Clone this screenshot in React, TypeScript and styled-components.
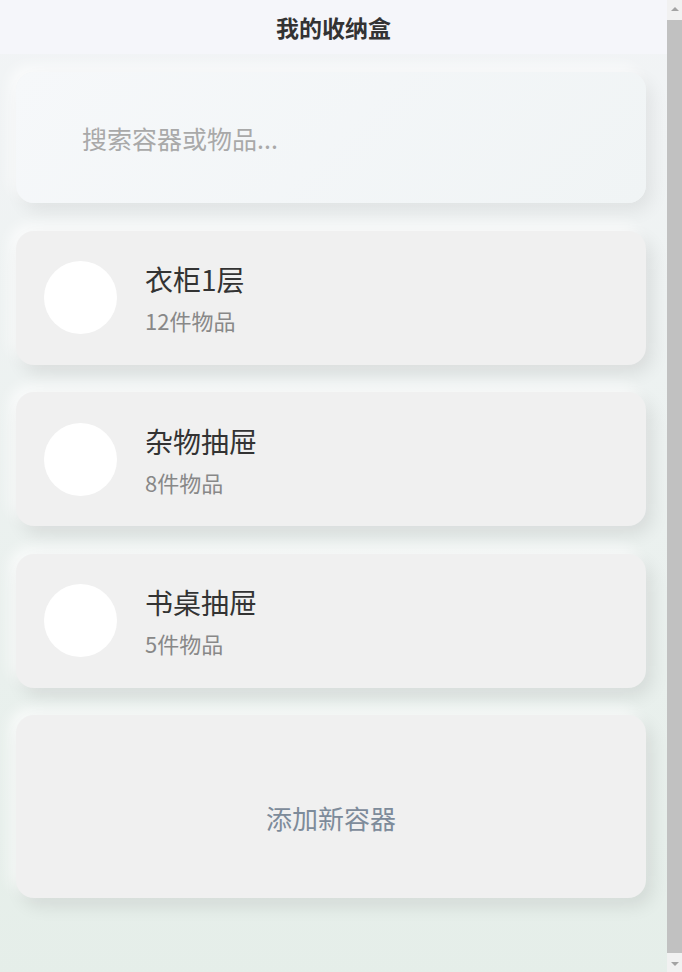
import React from "react";
import styled, { createGlobalStyle } from "styled-components";

const Global = createGlobalStyle`
  html, body {
    margin: 0;
    padding: 0;
  }
  body {
    font-family: "Noto Sans CJK SC", "Noto Sans", sans-serif;
    background: linear-gradient(180deg, #f2f4f6 0%, #e5eee9 100%);
    min-height: 100vh;
  }
  * { box-sizing: border-box; }
`;

const Page = styled.div`
  display: flex;
  flex-direction: column;
  margin-right: 15px;
`;

const Header = styled.header`
  height: 54px;
  display: flex;
  align-items: center;
  justify-content: center;
  background: #f5f6fa;
`;

const HeaderTitle = styled.h1`
  margin: 0;
  font-size: 23px;
  font-weight: 700;
  color: #333;
`;

const Main = styled.main`
  display: flex;
  flex-direction: column;
  gap: 27.5px;
  padding: 18px 21px 82px 16px;
`;

const SearchBox = styled.div`
  height: 131px;
  border-radius: 18px;
  background: linear-gradient(135deg, #f6f8fa 0%, #f0f4f5 100%);
  box-shadow: 6px 8px 18px rgba(0, 0, 0, 0.07), -6px -6px 14px rgba(255, 255, 255, 0.7);
  display: flex;
  align-items: center;
  padding: 0 24px 0 64px;
`;

const SearchInput = styled.input`
  border: none;
  outline: none;
  background: transparent;
  width: 100%;
  font-family: inherit;
  font-size: 25px;
  color: #333;
  &::placeholder {
    color: #a9a9a9;
  }
`;

const Card = styled.div`
  height: 134px;
  border-radius: 18px;
  background: #f0f0f0;
  box-shadow: 6px 8px 18px rgba(0, 0, 0, 0.09), -6px -6px 14px rgba(255, 255, 255, 0.75);
  display: flex;
  align-items: center;
  padding: 0 28px;
  gap: 28px;
`;

const Avatar = styled.div`
  width: 73px;
  height: 73px;
  border-radius: 50%;
  background: #ffffff;
  flex-shrink: 0;
`;

const Info = styled.div`
  display: flex;
  flex-direction: column;
  gap: 9px;
`;

const Name = styled.div`
  font-size: 28px;
  line-height: 36px;
  color: #333;
`;

const Count = styled.div`
  font-size: 22px;
  line-height: 28px;
  color: #888;
`;

const AddCard = styled.div`
  height: 183px;
  border-radius: 18px;
  background: #f0f0f0;
  box-shadow: 6px 8px 18px rgba(0, 0, 0, 0.09), -6px -6px 14px rgba(255, 255, 255, 0.75);
  display: flex;
  align-items: center;
  justify-content: center;
  padding-top: 22px;
`;

const AddText = styled.span`
  font-size: 26px;
  color: #7d8b9a;
`;

/* Mimics the browser's classic vertical scrollbar seen at the right edge */
const ScrollTrack = styled.div`
  position: fixed;
  top: 0;
  right: 0;
  width: 15px;
  height: 100vh;
  background: #f1f1f1;
  display: flex;
  flex-direction: column;
  align-items: center;
`;

const ScrollArrow = styled.div<{ $dir: "up" | "down" }>`
  height: 17px;
  width: 15px;
  display: flex;
  align-items: center;
  justify-content: center;
  flex-shrink: 0;
  &::before {
    content: "";
    border-left: 4px solid transparent;
    border-right: 4px solid transparent;
    ${(p) =>
      p.$dir === "up"
        ? "border-bottom: 4px solid #a3a3a3;"
        : "border-top: 4px solid #a3a3a3;"}
  }
`;

const ScrollThumb = styled.div`
  flex: 1;
  width: 15px;
  margin: 3px 0 2px;
  background: #c1c1c1;
`;

const items = [
  { name: "衣柜1层", count: "12件物品" },
  { name: "杂物抽屉", count: "8件物品" },
  { name: "书桌抽屉", count: "5件物品" },
];

export default function App() {
  return (
    <>
      <Global />
      <Page>
        <Header>
          <HeaderTitle>我的收纳盒</HeaderTitle>
        </Header>
        <Main>
          <SearchBox>
            <SearchInput placeholder="搜索容器或物品..." />
          </SearchBox>
          {items.map((it) => (
            <Card key={it.name}>
              <Avatar />
              <Info>
                <Name>{it.name}</Name>
                <Count>{it.count}</Count>
              </Info>
            </Card>
          ))}
          <AddCard>
            <AddText>添加新容器</AddText>
          </AddCard>
        </Main>
      </Page>
      <ScrollTrack aria-hidden>
        <ScrollArrow $dir="up" />
        <ScrollThumb />
        <ScrollArrow $dir="down" />
      </ScrollTrack>
    </>
  );
}
